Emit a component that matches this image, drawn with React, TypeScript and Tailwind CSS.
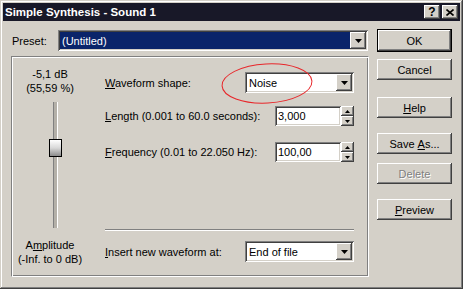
import React from 'react';

const raised =
  'bg-[#d4d0c8] shadow-[inset_-1px_-1px_#404040,inset_1px_1px_#ffffff,inset_-2px_-2px_#808080,inset_2px_2px_#d4d0c8]';
const sunken =
  'shadow-[inset_1px_1px_#808080,inset_-1px_-1px_#ffffff,inset_2px_2px_#404040,inset_-2px_-2px_#d4d0c8]';

const DownArrow = () => (
  <svg width="7" height="4" viewBox="0 0 7 4">
    <polygon points="0,0 7,0 3.5,4" fill="#000" />
  </svg>
);

const Combo = ({ value, selected = false, className = '' }: { value: string; selected?: boolean; className?: string }) => (
  <div className={`flex h-[21px] bg-white p-[2px] ${sunken} ${className}`}>
    <div
      className={`flex flex-1 items-center pl-[2px] ${selected ? 'bg-[#0a246a] text-white' : 'text-black'}`}
    >
      {value}
    </div>
    <div className={`flex w-[16px] items-center justify-center ${raised}`}>
      <DownArrow />
    </div>
  </div>
);

const Spin = () => (
  <div className="flex w-[13px] flex-col">
    <div className={`flex h-[10px] items-center justify-center ${raised}`}>
      <svg width="5" height="3" viewBox="0 0 5 3">
        <polygon points="0,3 5,3 2.5,0" fill="#000" />
      </svg>
    </div>
    <div className={`flex h-[10px] items-center justify-center ${raised}`}>
      <svg width="5" height="3" viewBox="0 0 5 3">
        <polygon points="0,0 5,0 2.5,3" fill="#000" />
      </svg>
    </div>
  </div>
);

const Edit = ({ value }: { value: string }) => (
  <div className="flex h-[20px] items-center">
    <div className={`flex h-[20px] w-[66px] items-center bg-white pl-[3px] ${sunken}`}>{value}</div>
    <Spin />
  </div>
);

const Btn = ({ children, mt, disabled = false, isDefault = false }: { children: React.ReactNode; mt: string; disabled?: boolean; isDefault?: boolean }) => (
  <div className={`${mt} ${isDefault ? 'h-[23px] border border-black' : 'h-[21px]'} w-[75px]`}>
    <div
      className={`flex h-full w-full items-center justify-center ${raised} ${disabled ? 'text-[#808080] [text-shadow:1px_1px_#ffffff]' : 'text-black'}`}
    >
      {children}
    </div>
  </div>
);

export default function App() {
  return (
    <div
      className="relative h-[289px] w-[463px] bg-[#d4d0c8] p-[3px] text-[11px] leading-[14px] text-black shadow-[inset_-1px_-1px_#404040,inset_1px_1px_#d4d0c8,inset_-2px_-2px_#808080,inset_2px_2px_#ffffff]"
      style={{ fontFamily: '"Liberation Sans", Arial, sans-serif' }}
    >
      {/* title bar */}
      <div className="flex h-[18px] items-center justify-between bg-[#181828] pl-[2px] pr-[2px]">
        <span className="text-[11.5px] font-bold text-white">Simple Synthesis - Sound 1</span>
        <div className="flex gap-[2px]">
          <div className={`flex h-[14px] w-[16px] items-center justify-center text-[12px] font-bold leading-none ${raised}`}>?</div>
          <div className={`flex h-[14px] w-[16px] items-center justify-center ${raised}`}>
            <svg width="8" height="7" viewBox="0 0 8 7">
              <path d="M0.5 0.5 L7.5 6.5 M7.5 0.5 L0.5 6.5" stroke="#000" strokeWidth="1.6" />
            </svg>
          </div>
        </div>
      </div>

      <div className="flex pl-[8px]">
        {/* left column */}
        <div className="flex w-[358px] flex-col">
          <div className="mt-[9px] flex h-[21px] items-center">
            <span className="ml-[1px] w-[46px]">Preset:</span>
            <Combo value="(Untitled)" selected className="w-[310px]" />
          </div>

          <div className="mt-[5px] flex h-[221px] border-b border-l border-r border-t border-b-white border-l-[#808080] border-r-white border-t-[#808080] shadow-[inset_1px_1px_#ffffff,inset_-1px_-1px_#808080]">
            {/* amplitude */}
            <div className="flex w-[76px] flex-col items-center pt-[10px]">
              <span>-5,1 dB</span>
              <span>(55,59 %)</span>
              <div className="relative ml-[11px] mt-[7px] h-[126px] w-[5px] border-l border-r border-l-[#808080] border-r-white bg-[#b4b0a8]">
                <div className="absolute left-[-5px] top-[37px] h-[18px] w-[13px] border border-black bg-gradient-to-b from-white via-[#d8d8d8] to-[#8c8c8c]" />
              </div>
              <span className="mt-[10px]">
                A<span className="underline">m</span>plitude
              </span>
              <span>(-Inf. to 0 dB)</span>
            </div>

            {/* settings */}
            <div className="ml-[17px] flex w-[249px] flex-col pt-[15px]">
              <div className="flex h-[21px] items-center justify-between">
                <span>
                  <span className="underline">W</span>aveform shape:
                </span>
                <Combo value="Noise" className="w-[109px]" />
              </div>
              <div className="mt-[13px] flex h-[20px] items-center justify-between">
                <span>
                  <span className="underline">L</span>ength (0.001 to 60.0 seconds):
                </span>
                <Edit value="3,000" />
              </div>
              <div className="mt-[16px] flex h-[20px] items-center justify-between">
                <span>
                  <span className="underline">F</span>requency (0.01 to 22.050 Hz):
                </span>
                <Edit value="100,00" />
              </div>
              <div className="mt-[67px] h-[2px] border-t border-b border-t-[#808080] border-b-white" />
              <div className="mt-[10px] flex h-[21px] items-center justify-between">
                <span>
                  <span className="underline">I</span>nsert new waveform at:
                </span>
                <Combo value="End of file" className="w-[109px]" />
              </div>
            </div>
          </div>
        </div>

        {/* buttons */}
        <div className="ml-[8px] flex flex-col">
          <Btn mt="mt-[8px]" isDefault>OK</Btn>
          <Btn mt="mt-[7px]">Cancel</Btn>
          <Btn mt="mt-[17px]">
            <span className="underline">H</span>elp
          </Btn>
          <Btn mt="mt-[15px]">
            Save&nbsp;<span className="underline">A</span>s...
          </Btn>
          <Btn mt="mt-[9px]" disabled>Delete</Btn>
          <Btn mt="mt-[15px]">
            <span className="underline">P</span>review
          </Btn>
        </div>
      </div>

      {/* red annotation ellipse */}
      <svg className="pointer-events-none absolute left-[220px] top-[62px]" width="96" height="44" viewBox="0 0 96 44">
        <ellipse cx="47" cy="21.5" rx="45" ry="19.5" fill="none" stroke="#e8262a" strokeWidth="1" transform="rotate(-3 47 21.5)" />
      </svg>
    </div>
  );
}
